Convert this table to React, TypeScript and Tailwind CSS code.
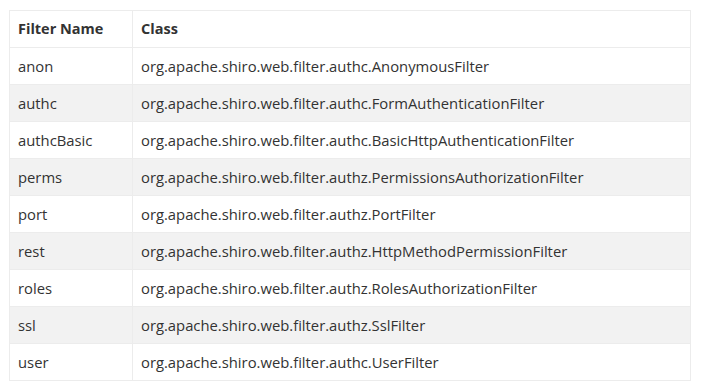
const rows: [string, string][] = [
  ["anon", "org.apache.shiro.web.filter.authc.AnonymousFilter"],
  ["authc", "org.apache.shiro.web.filter.authc.FormAuthenticationFilter"],
  ["authcBasic", "org.apache.shiro.web.filter.authc.BasicHttpAuthenticationFilter"],
  ["perms", "org.apache.shiro.web.filter.authz.PermissionsAuthorizationFilter"],
  ["port", "org.apache.shiro.web.filter.authz.PortFilter"],
  ["rest", "org.apache.shiro.web.filter.authz.HttpMethodPermissionFilter"],
  ["roles", "org.apache.shiro.web.filter.authz.RolesAuthorizationFilter"],
  ["ssl", "org.apache.shiro.web.filter.authz.SslFilter"],
  ["user", "org.apache.shiro.web.filter.authc.UserFilter"],
];

export default function App() {
  return (
    <div className="bg-white w-[701px] h-[388px] pt-[10px] pl-[9px] font-['Open_Sans',sans-serif] text-[#333]">
      <table className="w-[682px] border-collapse">
        <thead>
          <tr className="h-[37px] text-[14.5px]">
            <th className="w-[123px] border border-[#ececec] px-2 text-left font-bold">Filter Name</th>
            <th className="border border-[#ececec] px-2 text-left font-bold">Class</th>
          </tr>
        </thead>
        <tbody>
          {rows.map(([name, cls], i) => (
            <tr key={name} className={`h-[37px] text-[14.8px] ${i % 2 === 1 ? "bg-[#f2f2f2]" : "bg-white"}`}>
              <td className="border border-[#ececec] px-2">{name}</td>
              <td className="border border-[#ececec] px-2">{cls}</td>
            </tr>
          ))}
        </tbody>
      </table>
    </div>
  );
}
